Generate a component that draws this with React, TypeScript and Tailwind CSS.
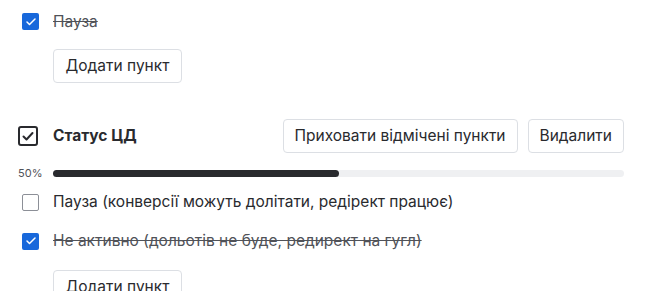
import { Check } from 'lucide-react';

type Item = { text: string; done: boolean };

const CheckBox = ({ checked }: { checked: boolean }) =>
  checked ? (
    <span className="flex h-[17px] w-[17px] shrink-0 items-center justify-center rounded-[2px] bg-[#1868db]">
      <Check className="h-3 w-3 text-white" strokeWidth={3} />
    </span>
  ) : (
    <span className="h-[17px] w-[17px] shrink-0 rounded-[2px] border border-[#8c8f97] bg-white" />
  );

const ItemRow = ({ item }: { item: Item }) => (
  <div className="flex h-[39px] items-center gap-[14px] pl-[22px]">
    <CheckBox checked={item.done} />
    <span className={item.done ? 'text-[#505258] line-through' : 'text-[#292a2e]'}>{item.text}</span>
  </div>
);

const AddButton = () => (
  <button className="ml-[53px] h-[34px] w-[129px] rounded-[4px] border border-[#dcdfe4] bg-white text-[#292a2e]">
    Додати пункт
  </button>
);

export default function App() {
  const items: Item[] = [
    { text: 'Пауза (конверсії можуть долітати, редірект працює)', done: false },
    { text: 'Не активно (дольотів не буде, редирект на гугл)', done: true },
  ];
  const pct = 50;

  return (
    <div
      className="h-[291px] w-[661px] overflow-hidden bg-white text-[15.5px] text-[#292a2e]"
      style={{ fontFamily: 'Inter, "Noto Sans", sans-serif' }}
    >
      <div className="pt-[2px]">
        <ItemRow item={{ text: 'Пауза', done: true }} />
      </div>
      <div className="mt-[8px]">
        <AddButton />
      </div>

      <div className="mt-[36px] flex items-center pr-[37px]">
        <div className="flex w-[53px] justify-center pl-[3px]">
          <svg width="20" height="20" viewBox="0 0 20 20" fill="none">
            <rect x="1" y="1" width="18" height="18" rx="2" stroke="#292a2e" strokeWidth="2" />
            <path d="M5.5 10.5l3 3 6-6.5" stroke="#292a2e" strokeWidth="2" strokeLinecap="round" strokeLinejoin="round" />
          </svg>
        </div>
        <span className="font-bold">Статус ЦД</span>
        <div className="ml-auto flex gap-[10px]">
          <button className="h-[34px] rounded-[4px] border border-[#dcdfe4] bg-white px-[11px]">
            Приховати відмічені пункти
          </button>
          <button className="h-[34px] rounded-[4px] border border-[#dcdfe4] bg-white px-[11px]">
            Видалити
          </button>
        </div>
      </div>

      <div className="mt-[12px] flex items-center pr-[37px]">
        <span className="w-[53px] pl-[18px] text-[11px] text-[#505258]">{pct}%</span>
        <div className="h-[7px] flex-1 rounded-full bg-[#eff0f2]">
          <div className="h-full rounded-full bg-[#292a2e]" style={{ width: `${pct}%` }} />
        </div>
      </div>

      <div className="mt-[1px]">
        {items.map((it) => (
          <ItemRow key={it.text} item={it} />
        ))}
      </div>
      <div className="mt-[9px]">
        <AddButton />
      </div>
    </div>
  );
}
